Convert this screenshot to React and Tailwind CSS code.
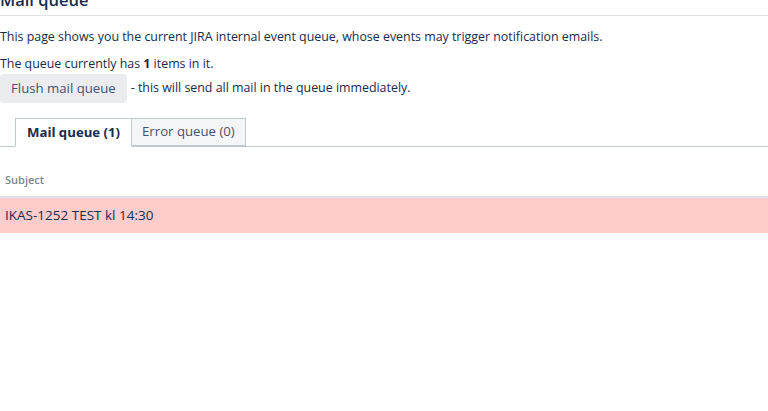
export default function App() {
  return (
    <div
      className="h-[411px] w-[768px] overflow-hidden bg-white text-[12.4px] text-[#172b4d]"
      style={{ fontFamily: '"Open Sans", "Noto Sans", sans-serif' }}
    >
      {/* Page header */}
      <div className="-mt-[12px] border-b border-[#dfe1e6] pb-[3px]">
        <h2 className="text-[16.5px] font-semibold leading-[24px] text-[#172b4d]">Mail queue</h2>
      </div>

      <p className="mt-[13px] leading-[16px]">
        This page shows you the current JIRA internal event queue, whose events may trigger notification emails.
      </p>
      <p className="mt-[11px] leading-[16px]">
        The queue currently has <strong className="font-bold">1</strong> items in it.
      </p>
      <div className="mt-[2px] flex items-center">
        <button className="h-[29px] rounded-[3px] bg-[#ebecf0] px-[11px] text-[13.2px] text-[#42526e]">
          Flush mail queue
        </button>
        <span className="ml-[4px]">- this will send all mail in the queue immediately.</span>
      </div>

      {/* Tabs */}
      <div className="mt-[15px] flex border-b border-[#c1c7d0] pl-[15px] text-[13.2px]">
        <div className="-mb-px flex h-[29px] items-center border border-b-white border-[#c1c7d0] bg-white px-[11px] font-bold">
          Mail queue (1)
        </div>
        <div className="flex h-[28px] items-center border border-l-0 border-[#c1c7d0] bg-[#f4f5f7] px-[10px] text-[#42526e]">
          Error queue (0)
        </div>
      </div>

      {/* Table */}
      <div className="mt-[26px] border-b-2 border-[#dfe1e6] px-[5px] pb-[9px] text-[11px] font-semibold leading-[14px] text-[#7a869a]">
        Subject
      </div>
      <div className="flex h-[35px] items-center bg-[#ffcccc] px-[5px] text-[13.5px]">IKAS-1252 TEST kl 14:30</div>
    </div>
  );
}
